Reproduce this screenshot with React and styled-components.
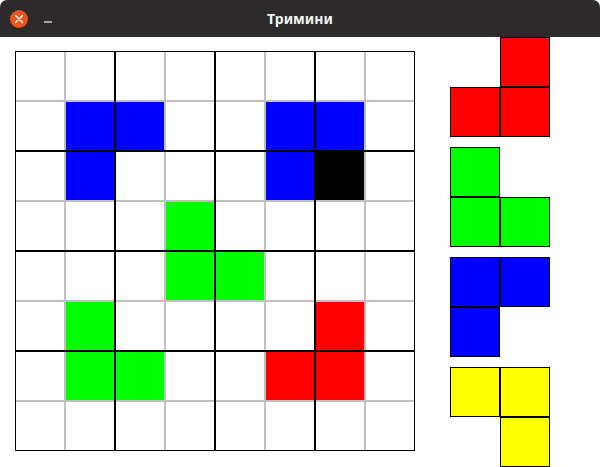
import React from "react";
import styled, { createGlobalStyle } from "styled-components";

const Global = createGlobalStyle`
  html, body { margin: 0; padding: 0; background: #ffffff; }
  #root { width: 600px; height: 467px; overflow: hidden; }
`;

const Window = styled.div`
  width: 600px;
  height: 467px;
  display: flex;
  flex-direction: column;
  background: #ffffff;
  font-family: "Noto Sans", "DejaVu Sans", sans-serif;
`;

const TitleBar = styled.div`
  position: relative;
  height: 37px;
  flex: 0 0 37px;
  background: #2c2a2a;
  border-radius: 7px 7px 0 0;
  display: flex;
  align-items: center;
  justify-content: center;
`;

const Controls = styled.div`
  position: absolute;
  left: 10px;
  top: 10px;
  display: flex;
  align-items: center;
  gap: 11px;
`;

const CloseButton = styled.div`
  width: 18px;
  height: 18px;
  border-radius: 50%;
  background: #e95420;
  display: flex;
  align-items: center;
  justify-content: center;
`;

const MinButton = styled.div`
  width: 18px;
  height: 18px;
  display: flex;
  align-items: center;
  justify-content: center;
`;

const Title = styled.div`
  color: #f2f2f2;
  font-weight: 700;
  font-size: 14px;
  line-height: 1;
  margin-top: 1px;
`;

const Content = styled.div`
  display: flex;
  align-items: flex-start;
  flex: 1;
`;

const Board = styled.div`
  margin: 14px 0 0 15px;
  display: grid;
  grid-template-columns: repeat(4, 98px);
  grid-auto-rows: 98px;
  gap: 2px;
  background: #000000;
  border: 1px solid #000000;
`;

const Block = styled.div`
  display: grid;
  grid-template-columns: repeat(2, 48px);
  grid-auto-rows: 48px;
  gap: 2px;
  background: #c0c0c0;
`;

const Cell = styled.div`
  background: ${(p) => p.$color || "#ffffff"};
`;

const PieceColumn = styled.div`
  margin-left: 35px;
  display: flex;
  flex-direction: column;
  gap: 10px;
`;

const Piece = styled.div`
  display: grid;
  grid-template-columns: repeat(2, 50px);
  grid-auto-rows: 50px;
`;

const Square = styled.div`
  box-sizing: border-box;
  background: ${(p) => p.$color || "transparent"};
  border: ${(p) => (p.$color ? "1px solid #000000" : "none")};
`;

const C = {
  b: "#0000ff",
  g: "#00ff00",
  r: "#ff0000",
  k: "#000000",
  y: "#ffff00",
};

const BOARD = [
  "........",
  ".bb..bb.",
  ".b...bk.",
  "...g....",
  "...gg...",
  ".g....r.",
  ".gg..rr.",
  "........",
];

const PIECES = [
  { color: C.r, cells: [0, 1, 1, 1] },
  { color: C.g, cells: [1, 0, 1, 1] },
  { color: C.b, cells: [1, 1, 1, 0] },
  { color: C.y, cells: [1, 1, 0, 1] },
];

function colorAt(r, c) {
  const ch = BOARD[r][c];
  return ch === "." ? null : C[ch];
}

export default function App() {
  const blocks = [];
  for (let br = 0; br < 4; br++) {
    for (let bc = 0; bc < 4; bc++) {
      const cells = [];
      for (let i = 0; i < 2; i++) {
        for (let j = 0; j < 2; j++) {
          const r = br * 2 + i;
          const c = bc * 2 + j;
          cells.push(<Cell key={`${r}-${c}`} $color={colorAt(r, c)} />);
        }
      }
      blocks.push(<Block key={`${br}-${bc}`}>{cells}</Block>);
    }
  }

  return (
    <>
      <Global />
      <Window>
        <TitleBar>
          <Controls>
            <CloseButton>
              <svg width="10" height="10" viewBox="0 0 10 10">
                <path d="M1.5 1.5 L8.5 8.5 M8.5 1.5 L1.5 8.5" stroke="#ffffff" strokeWidth="1.4" strokeLinecap="round" />
              </svg>
            </CloseButton>
            <MinButton>
              <svg width="10" height="10" viewBox="0 0 10 10">
                <path d="M1 8 L9 8" stroke="#ffffff" strokeWidth="1.2" />
              </svg>
            </MinButton>
          </Controls>
          <Title>Тримини</Title>
        </TitleBar>
        <Content>
          <Board>{blocks}</Board>
          <PieceColumn>
            {PIECES.map((p, i) => (
              <Piece key={i}>
                {p.cells.map((on, k) => (
                  <Square key={k} $color={on ? p.color : null} />
                ))}
              </Piece>
            ))}
          </PieceColumn>
        </Content>
      </Window>
    </>
  );
}
